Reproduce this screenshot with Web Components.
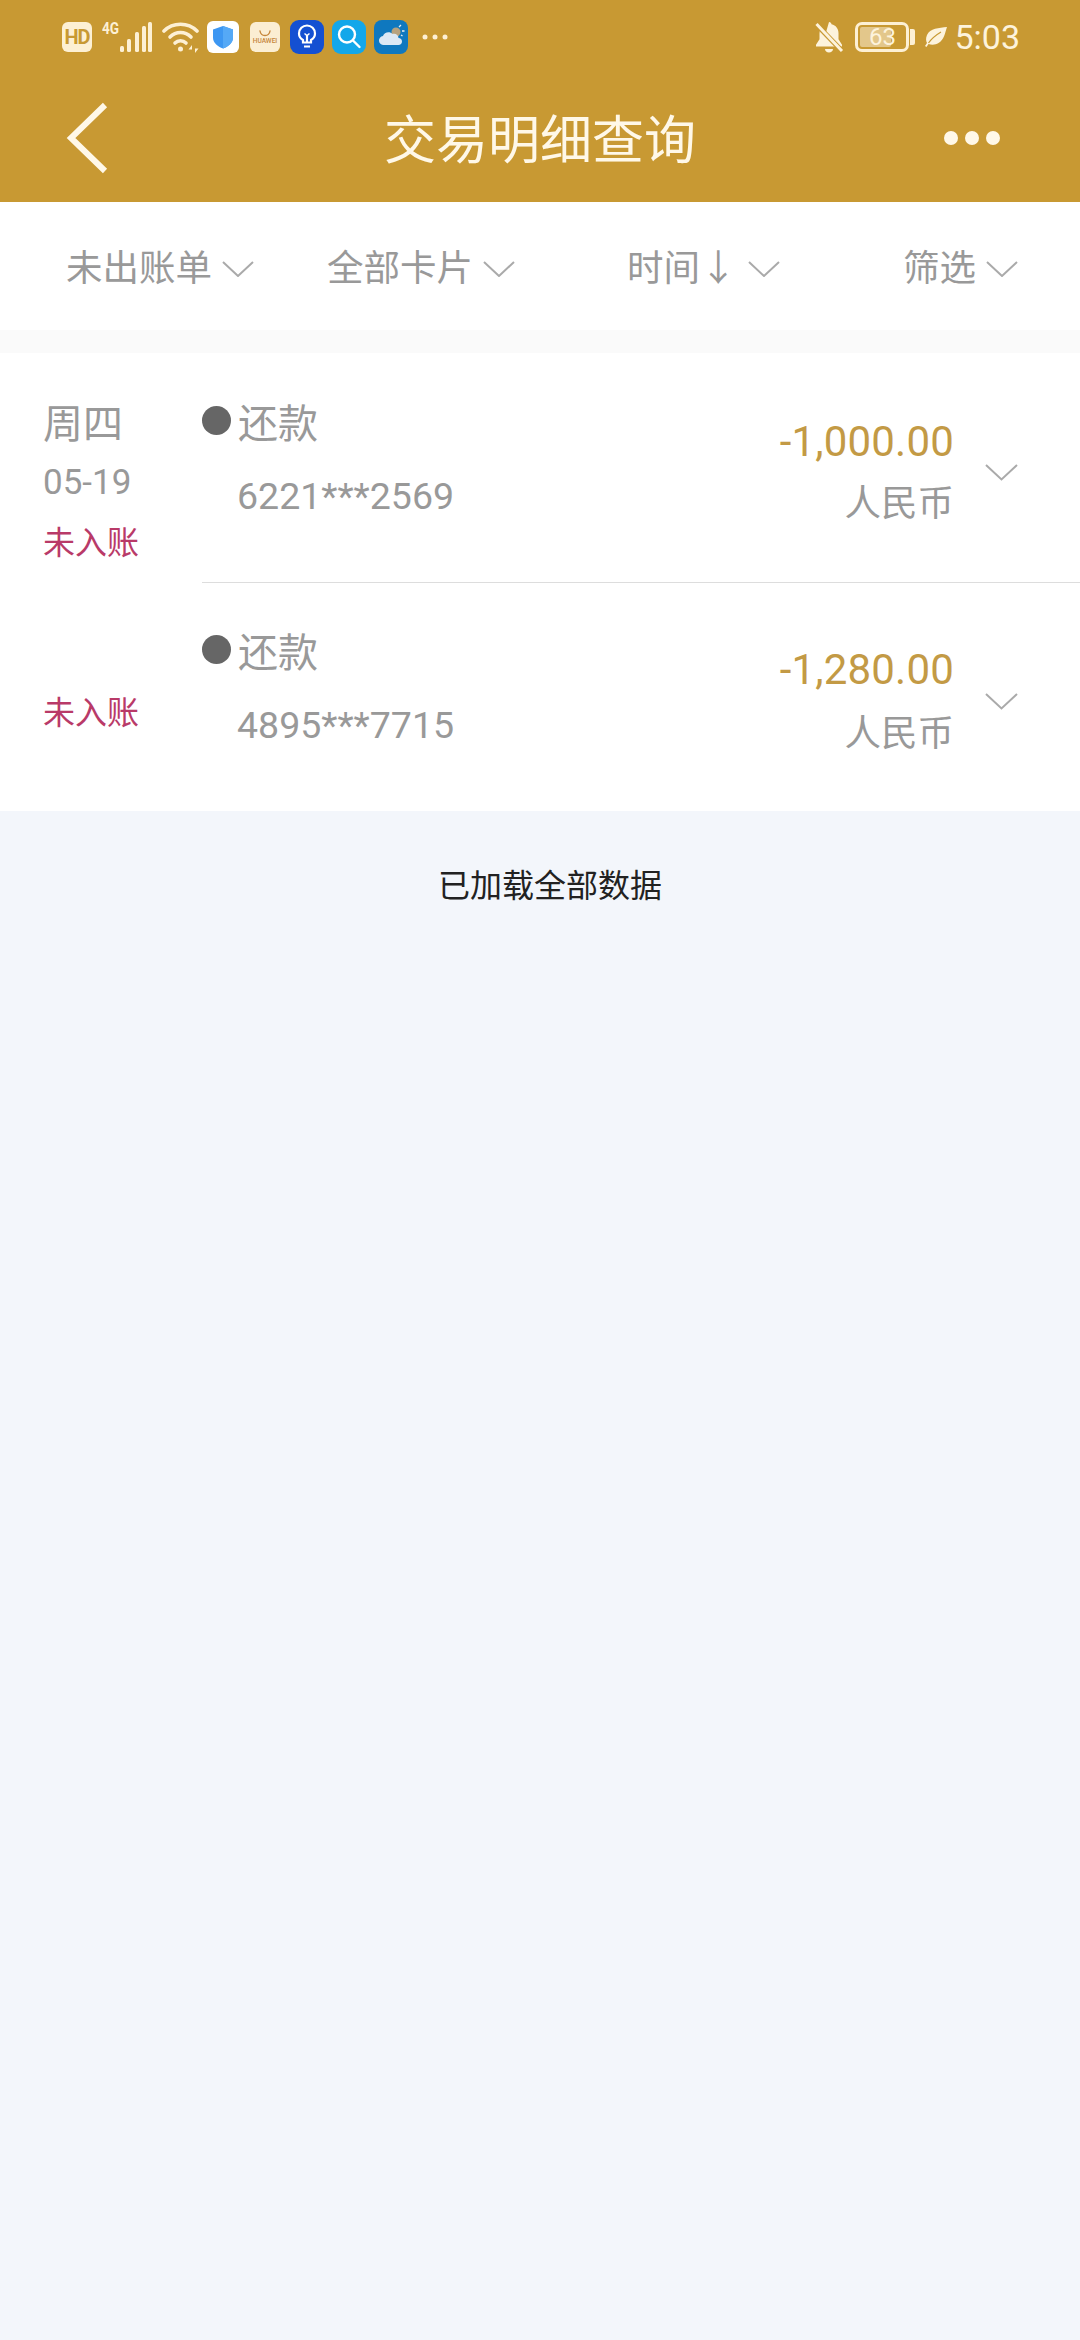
<!DOCTYPE html>
<html lang="zh"><head><meta charset="utf-8"><title>交易明细查询</title>
<style>
html,body{margin:0;padding:0;background:#f3f6fb}
body{width:1080px;height:2340px;overflow:hidden;font-family:Roboto,"Noto Sans CJK SC",sans-serif}
</style></head><body>
<app-header>
  <status-bar></status-bar>
  <nav-bar>交易明细查询</nav-bar>
</app-header>
<filter-bar>
  <filter-item style="--w:261px">未出账单</filter-item>
  <filter-item style="--w:300px">全部卡片</filter-item>
  <filter-item style="--w:276px;--gap:11px">时间↓</filter-item>
  <filter-item style="--w:auto">筛选</filter-item>
</filter-bar>
<tx-list>
  <tx-row day="周四" date="05-19" type="还款" card="6221***2569" amount="-1,000.00"></tx-row>
  <tx-row class="second" type="还款" card="4895***7715" amount="-1,280.00"></tx-row>
</tx-list>
<load-end>已加载全部数据</load-end>
<script>
function def(name,css,html){
  customElements.define(name,class extends HTMLElement{
    connectedCallback(){
      if(this.shadowRoot)return;
      const r=this.attachShadow({mode:'open'});
      r.innerHTML='<style>'+css+'</style>'+(typeof html==='function'?html(this):html);
    }
  });
}
def('app-header',':host{display:block;background:#c89933;height:202px;color:#fff}','<slot></slot>');
def('status-bar',`
:host{display:flex;align-items:center;height:74px;padding:0 0 0 62px;box-sizing:border-box;color:#fdf3dc;font-family:Roboto,sans-serif}
svg{display:block;flex:none}
.hd{width:30px;height:30px;border-radius:6px;background:#fdf0d4;color:#c89933;font:700 20px/30px Roboto,sans-serif;text-align:center;letter-spacing:-1px;flex:none}
.g{width:20px;margin:-18px 0 0 10px;font:700 17px/16px Roboto,sans-serif;transform:scaleX(.8);transform-origin:left;color:#fdf0d4;flex:none}
.t{flex:none;box-sizing:border-box;display:flex;align-items:center;justify-content:center;overflow:hidden}
.hw{width:30px;height:30px;border-radius:6px;background:#fbeed3;margin-left:11px;flex-direction:column;color:#c6863c;font:500 6.6px/7px Roboto,sans-serif}
.hw svg{margin-bottom:1px}
.batt{position:relative;box-sizing:border-box;width:54px;height:30px;border:3px solid #fdf0d4;border-radius:7px;margin-left:11px;font:400 24px/24px Roboto,sans-serif;text-align:center;color:#fdf3dc;flex:none}
.batt i{position:absolute;left:2px;top:2px;bottom:2px;width:31px;background:#e3c78b;border-radius:2px}
.batt span{position:relative}
.nub{width:5px;height:16px;background:#fdf0d4;border-radius:0 2px 2px 0;margin-left:1px;flex:none}
.time{font:400 34px/36px Roboto,sans-serif;margin-left:7px;color:#fdf3dc;flex:none}
.sp{flex:1}
`,`
<div class="hd">HD</div>
<div class="g">4G</div>
<svg style="margin-left:-2px" width="34" height="30" viewBox="0 0 34 30" fill="#fdf0d4"><rect x="0" y="24" width="4" height="6" rx="1.5"/><rect x="7" y="17" width="4" height="13" rx="1.5"/><rect x="15" y="10" width="4" height="20" rx="1.5"/><rect x="22" y="4" width="4" height="26" rx="1.5"/><rect x="28" y="0" width="4" height="30" rx="1.5"/></svg>
<svg style="margin-left:8px" width="38" height="32" viewBox="0 0 38 32" fill="none" stroke="#fdf0d4" stroke-width="3.6" stroke-linecap="round"><path d="M2 10C11 1 26 1 35 10"/><path d="M8 16C14 10 23 10 29 16"/><path d="M13 22C16 19 21 19 24 22"/><circle cx="18.500" cy="28" r="2.500" fill="#fdf0d4" stroke="none"/><path d="M30 24l-3.500 4.500h3.500zM33 32l3.500-4.500h-3.500z" fill="#fdf0d4" stroke="none"/></svg>
<svg style="margin-left:7px" width="32" height="32" viewBox="0 0 32 32"><rect width="32" height="32" rx="6" fill="#fff"/><path d="M16 5l10 3.500v8c0 5.500-4.500 9-10 11-5.500-2-10-5.500-10-11v-8z" fill="#3d97f2"/><path d="M16 5l10 3.500v8c0 5.500-4.500 9-10 11z" fill="#55a9f6"/></svg>
<div class="t hw"><svg width="14" height="7" viewBox="0 0 14 7" fill="none" stroke="#c6863c" stroke-width="1.400" stroke-linecap="round"><path d="M2 1c1 6 9 6 10 0"/></svg>HUAWEI</div>
<svg style="margin-left:10px" width="34" height="34" viewBox="0 0 34 34" fill="none" stroke="#fff" stroke-width="2.200"><rect width="34" height="34" rx="9" fill="#1450d2" stroke="none"/><path d="M13 22.500v-2.500c-2.500-1.500-4-4-4-6.500a8 8 0 0 1 16 0c0 2.500-1.500 5-4 6.500v2.500zM14 26.500h6M17 22v-7"/><path d="M14.500 13.500l2.500 2 2.500-2" stroke-width="1.500"/></svg>
<svg style="margin-left:8px" width="34" height="34" viewBox="0 0 34 34" fill="none" stroke="#fff" stroke-width="2.400" stroke-linecap="round"><rect width="34" height="34" rx="9" fill="#13a7ea" stroke="none"/><circle cx="15" cy="14.500" r="8"/><path d="M21 20.500l6.500 6.500"/></svg>
<svg style="margin-left:8px" width="34" height="34" viewBox="0 0 34 34"><rect width="34" height="34" rx="8" fill="#0f78bf"/><circle cx="22" cy="12" r="4.500" fill="#b7a27f"/><path d="M25 7l2-2M28 11h2.500M27 15l1.500 1" stroke="#e9eef3" stroke-width="1.300"/><path d="M10 25a4.500 4.500 0 0 1-1-9c1-4 7-5 9.500-2 3-1 6 1 6 4 2 0 3.500 1.500 3.500 3.500s-1.500 3.500-3.500 3.500z" fill="#dce8f5"/></svg>
<svg style="margin-left:14px" width="26" height="6" viewBox="0 0 26 6" fill="#fdf0d4"><circle cx="3" cy="3" r="2.500"/><circle cx="13" cy="3" r="2.500"/><circle cx="23" cy="3" r="2.500"/></svg>
<div class="sp"></div>
<svg width="30" height="32" viewBox="0 0 30 32" fill="#fdf3dc"><path d="M15 1c1.500 0 2.500 1 2.500 2.300 4.500 1 7 4.500 7 9v6l3.500 5.500v1.700H2v-1.700l3.500-5.500v-6c0-1.500.3-3 1-4.300L24 25H8zM11 28h8c0 2-1.800 3.500-4 3.500s-4-1.500-4-3.500z"/><path d="M2 3l26 27" stroke="#c89933" stroke-width="5"/><path d="M2.500 3l25.500 27" stroke="#fdf3dc" stroke-width="3"/></svg>
<div class="batt"><i></i><span>63</span></div>
<div class="nub"></div>
<svg style="margin-left:10px" width="22" height="20" viewBox="0 0 22 20" fill="#fdf3dc"><path d="M22 0C14 1 5 1 2 8c-1.500 3.500-1 6 0 8l-2 3 1.500 1 2-3c3 1 7 1 10-1C19 13 20 6 22 0z"/><path d="M3.500 16C7 11 11 8 16 5" stroke="#c89933" stroke-width="1.200" fill="none"/></svg>
<div class="time">5:03</div>
<div style="width:60px;flex:none"></div>
`);
def('nav-bar',`
:host{display:grid;grid-template-columns:1fr auto 1fr;align-items:center;height:128px;padding:0 80px 1px 80px;box-sizing:border-box;color:#fff8e8}
svg{display:block}
.b{margin:0 0 0 -15px}
.t{font:400 52px/64px "Noto Sans CJK SC",sans-serif;white-space:nowrap;margin-bottom:1px}
.m{justify-self:end}
`,`
<svg class="b" width="46" height="76" viewBox="0 0 46 76" fill="none" stroke="#fff8e8" stroke-width="6"><path d="M40 5L6 38l34 33"/></svg>
<div class="t"><slot></slot></div>
<svg class="m" width="56" height="14" viewBox="0 0 56 14" fill="#fff8e8"><circle cx="7" cy="7" r="7"/><circle cx="28" cy="7" r="7"/><circle cx="49" cy="7" r="7"/></svg>
`);
def('filter-bar',`:host{display:flex;align-items:center;height:128px;background:#fff;padding:0 0 0 66px;box-sizing:border-box}`,'<slot></slot>');
def('filter-item',`
:host{display:flex;align-items:center;flex:none;width:var(--w);color:#999;font:400 36.500px/48px "Noto Sans CJK SC",sans-serif}
svg{display:block;margin:6px 0 0 var(--gap,10px)}
`,`<slot></slot><svg width="32" height="16" viewBox="0 0 32 16" fill="none" stroke="#aaa" stroke-width="2"><path d="M1 1l15 14L31 1"/></svg>`);
def('tx-list',`:host{display:block;background:#fff}.band{height:23px;background:#fafafa}`,'<div class="band"></div><slot></slot>');
def('tx-row',`
:host{display:grid;grid-template-columns:202px 1fr auto 126px;height:229px;box-sizing:border-box;font-family:"Noto Sans CJK SC",sans-serif;color:#999}
.left{padding:44px 0 0 43px}
.day{font-size:40px;line-height:48px;height:48px}
.date{font:400 35px/40px Roboto,sans-serif;margin-top:18px}
.st{color:#b93a68;font-size:32px;line-height:40px;margin-top:17px}
.left.none{padding-top:16px}
:host(.second) .st{margin-top:92px}
.mid{padding-top:44px}
.type{display:flex;align-items:center;font-size:40px;line-height:48px;height:48px}
.dot{width:29px;height:29px;border-radius:50%;background:#666;margin:-1px 7px 0 0;flex:none}
.card{font:400 37.500px/48px Roboto,sans-serif;padding-left:35px;margin-top:27px;white-space:nowrap}
.amt{text-align:right;padding-top:65px}
.money{font:400 42px/48px Roboto,sans-serif;color:#c39a45;letter-spacing:.2px}
.cur{font-size:36.500px;line-height:48px;margin-top:11px}
.chev{padding:111px 0 0 31px}
:host(.second) .mid,:host(.second) .amt,:host(.second) .chev{border-top:1px solid #ddd}
:host(.second) .mid{padding-top:43px}
:host(.second) .amt{padding-top:63px}
:host(.second) .cur{margin-top:13px}
:host(.second) .chev{padding-top:110px}
svg{display:block}
`,h=>{
  const a=n=>h.getAttribute(n)||'';
  const left=a('day')?`<div class="left"><div class="day">${a('day')}</div><div class="date">${a('date')}</div><div class="st">未入账</div></div>`:`<div class="left none"><div class="st">未入账</div></div>`;
  return `${left}<div class="mid"><div class="type"><span class="dot"></span>${a('type')}</div><div class="card">${a('card')}</div></div><div class="amt"><div class="money">${a('amount')}</div><div class="cur">人民币</div></div><div class="chev"><svg width="33" height="17" viewBox="0 0 33 17" fill="none" stroke="#aaa" stroke-width="2"><path d="M1 1l15.500 14.500L32 1"/></svg></div>`;
});
def('load-end',`:host{display:block;text-align:center;color:#222;font:400 32px/44px "Noto Sans CJK SC",sans-serif;padding:50px 0 0 20px}`,'<slot></slot>');
</script>
</body></html>
